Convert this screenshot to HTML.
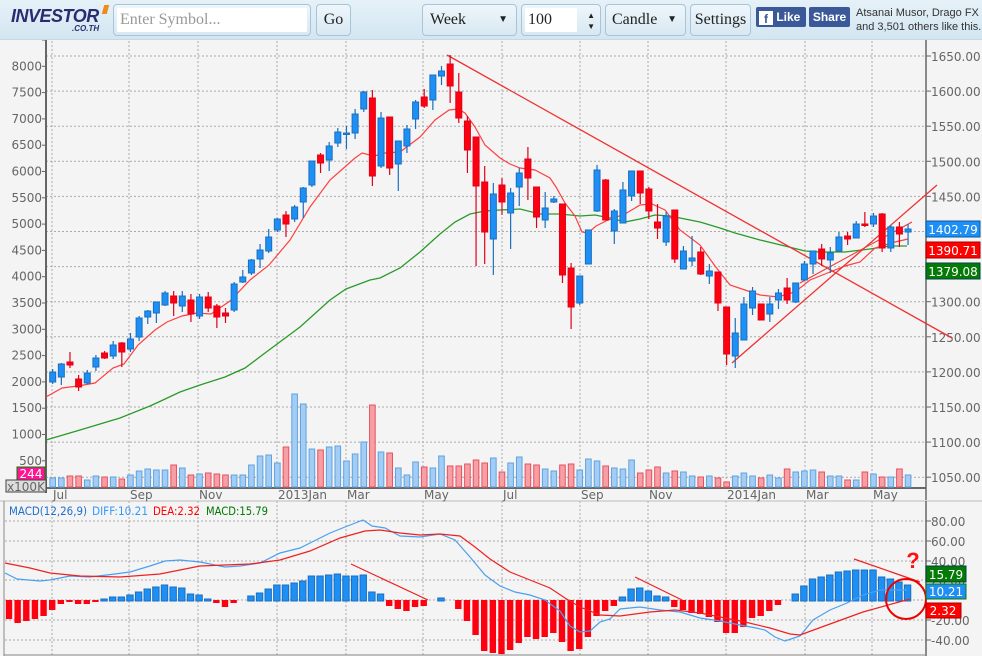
<!DOCTYPE html>
<html><head><meta charset="utf-8"><style>
*{margin:0;padding:0;box-sizing:border-box}
body{width:982px;height:656px;overflow:hidden;background:#f4f4f4;font-family:"DejaVu Sans",sans-serif;position:relative}
#hdr{position:absolute;left:0;top:0;width:982px;height:40px;background:linear-gradient(#e6f1f8,#d3e6f1);border-bottom:1px solid #c5d8e4;z-index:2}
.box{position:absolute;top:4px;height:32px;border:1px solid #a9c4d6;border-radius:4px;background:linear-gradient(#eef6fb,#d8e8f2);font-family:"Liberation Serif",serif;font-size:16px;color:#222;line-height:30px}
.fb{position:absolute;top:7px;height:20px;background:#3b5998;color:#fff;font-family:"Liberation Sans",sans-serif;font-weight:bold;font-size:12px;line-height:20px;border-radius:2px}
svg{position:absolute;left:0;top:0;z-index:1}
</style></head><body>
<div id="hdr">
 <div style="position:absolute;left:11px;top:6px;font-family:'Liberation Sans',sans-serif;font-weight:bold;font-style:italic;font-size:18px;color:#2b2c6f;letter-spacing:-0.5px">INVESTOR</div>
 <div style="position:absolute;left:103px;top:5px;width:5px;height:9px;background:#f08a1c;transform:skewX(-15deg)"></div>
 <div style="position:absolute;left:72px;top:24px;font-family:'Liberation Sans',sans-serif;font-weight:bold;font-style:italic;font-size:8px;color:#2b2c6f">.CO.TH</div>
 <div class="box" style="left:113px;width:198px;padding:3px"><div style="background:#fff;height:24px;line-height:24px;padding-left:3px;color:#999">Enter Symbol...</div></div>
 <div class="box" style="left:316px;width:35px;text-align:center">Go</div>
 <div class="box" style="left:422px;width:95px;padding-left:7px">Week<span style="position:absolute;right:8px;font-size:10px">▼</span></div>
 <div class="box" style="left:521px;width:80px;padding:3px"><div style="background:#fff;width:52px;height:24px;line-height:24px;padding-left:3px">100</div><span style="position:absolute;right:5px;font-size:8px;line-height:11px;top:5px">▲<br>▼</span></div>
 <div class="box" style="left:605px;width:81px;padding-left:6px">Candle<span style="position:absolute;right:8px;font-size:10px">▼</span></div>
 <div class="box" style="left:690px;width:61px;text-align:center">Settings</div>
 <div class="fb" style="left:756px;width:50px;padding-left:3px"><span style="display:inline-block;width:14px;height:14px;background:#fff;color:#3b5998;text-align:center;line-height:16px;font-size:12px;vertical-align:-2px">f</span> Like</div>
 <div class="fb" style="left:809px;width:41px;text-align:center">Share</div>
 <div style="position:absolute;left:856px;top:6px;font-family:'Liberation Sans',sans-serif;font-size:11px;line-height:14px;color:#333">Atsanai Musor, Drago FX<br>and 3,501 others like this.</div>
</div>
<svg id="s" width="982" height="656"></svg>
<script>
var S='';
function L(x1,y1,x2,y2,c,w,d){S+='<line x1="'+x1+'" y1="'+y1+'" x2="'+x2+'" y2="'+y2+'" stroke="'+c+'" stroke-width="'+(w||1)+'"'+(d?' stroke-dasharray="'+d+'"':'')+'/>';}
function R(x,y,w,h,f,s){S+='<rect x="'+x+'" y="'+y+'" width="'+w+'" height="'+h+'" fill="'+f+'"'+(s?' stroke="'+s+'" stroke-width="1"':'')+'/>';}
function T(x,y,t,c,sz,a,tl){S+='<text x="'+x+'" y="'+y+'" fill="'+c+'" font-size="'+(sz||12)+'" font-family="DejaVu Sans,sans-serif"'+(a?' text-anchor="'+a+'"':'')+(tl?' textLength="'+tl+'" lengthAdjust="spacingAndGlyphs"':'')+'>'+t+'</text>';}
function P(pts,c,w){S+='<polyline fill="none" stroke="'+c+'" stroke-width="'+(w||1)+'" points="'+pts+'"/>';}
var dx=[52,129,198,277,346,423,502,580,648,726,805,872];
for(var k=0;k<13;k++){var y=56+35.1*k;L(46,y,926,y,'#aaa',1,'2,2');}
dx.forEach(function(x){L(x,41,x,488,'#aaa',1,'2,2');L(x,501,x,655,'#aaa',1,'2,2');});
[521,541,561,580,600,620,640].forEach(function(y){L(5,y,926,y,'#aaa',1,'2,2');});
L(46,40,46,493,'#666',2);L(926,40,926,500,'#666',1.5);L(46,488,926,488,'#666',2);
L(0,501,982,501,'#bbb',1);L(4,501,4,656,'#888',1);L(926,501,926,656,'#666',1.5);L(4,655,926,655,'#888',1);
var lv=[8500,8000,7500,7000,6500,6000,5500,5000,4500,4000,3500,3000,2500,2000,1500,1000,500];
lv.forEach(function(v,i){var y=40+26.3*i;T(42,(i==0?y-1:y+4),v,'#666',12,'end');L(42,y,46,y,'#666');});
var rv=[1650,1600,1550,1500,1450,1400,1350,1300,1250,1200,1150,1100,1050];
rv.forEach(function(v,i){var y=56+35.1*i;T(931,y+5,v+'.00','#666',12);L(926,y,931,y,'#666');});
['Jul','Sep','Nov','2013Jan','Mar','May','Jul','Sep','Nov','2014Jan','Mar','May'].forEach(function(t,i){T(dx[i]+1,499,t,'#666',12);});
[[80,521],[60,541],[40,561],[20,580],[-20,620],[-40,640]].forEach(function(a){T(931,a[1]+5,a[0].toFixed(2),'#666',12);L(926,a[1],931,a[1],'#666');});
var V='b478 b478 r476 r476 b480 b476 r477 b477 r479 b475 b471 b469 b470 b470 r465 b468 r475 b474 r473 r474 r475 b475 b475 b465 b456 b455 b463 r447 b394 b404 b449 r450 b447 b446 b461 b454 b442 r405 b452 r453 b468 b475 b462 r467 b468 b456 r466 r466 r464 r460 r463 b458 r472 b463 b457 r464 r465 b469 b471 r465 r464 b470 b459 b461 r466 b468 b469 b460 r473 r470 r467 b473 r471 b472 b476 r477 b476 r478 r482 b476 b473 b476 r478 b475 b478 r469 b472 b471 b470 r472 b476 b476 r480 b480 r472 b474 r477 b477 r469 b475'.split(' ');
V.forEach(function(v,i){var x=52.7+8.64*i,y=+v.slice(1);R(x-2.8,y,5.6,487-y,v[0]=='b'?'#a3cdf5':'#f6a0a6',v[0]=='b'?'#5fa3e0':'#e8505f');});
P('46,440 80,430 120,418 150,406 163,400 180,392 200,385 225,377 245,368 265,353 300,327 330,300 346,289 370,280 380,278 400,268 420,252 440,234 455,222 470,214 485,211 500,210 520,209 540,214 560,214 580,216 595,215 610,218 625,222 640,219 655,215 670,216 680,218 700,222 720,228 735,233 760,240 785,246 805,251 820,252 845,252 870,249 890,246 907,246','#2a9a2a',1.3);
P('46,397 62,388 78,386 95,383 113,368 124,364 138,345 155,330 167,322 182,316 197,313 211,314 230,301 250,280 269,265 290,240 310,207 330,180 355,158 362,153 374,156 385,153 400,152 420,137 435,120 449,110 458,109 465,113 475,127 485,145 500,158 510,164 520,168 535,170 550,178 556,187 565,203 575,216 582,232 588,233 596,226 608,220 625,214 640,205 652,204 665,210 680,230 700,245 715,266 730,285 745,290 760,295 778,297 795,292 810,280 830,272 845,266 860,262 875,248 895,242 908,239','#ff4040',1.2);
L(447,55,952,338,'#f03030',1.3);L(732,363,937,185,'#f03030',1.3);L(800,283,912,222,'#f03030',1);
var C='b372,382,369,384|b364,377,363,385|r362,365,352,368|r379,387,375,391|b373,383,370,384|b358,367,355,371|r353,358,351,359|b345,356,341,359|r343,352,342,367|b339,349,333,352|b318,337,316,341|b311,317,310,324|b302,313,302,323|b293,305,291,306|r296,303,291,316|b296,306,291,312|r300,314,294,322|b297,316,294,319|r297,308,292,312|r306,317,304,328|r313,316,308,323|b284,310,282,312|b277,282,270,283|b260,273,259,275|b250,259,244,268|b237,251,229,253|b219,230,218,232|r215,224,211,237|b207,219,205,222|b188,202,187,218|b161,185,161,187|r155,163,153,173|b146,160,142,171|b132,143,128,147|b133,134,126,149|b114,133,109,139|b92,109,91,112|r98,176,90,186|b118,166,112,168|r117,168,117,175|b141,164,141,191|b129,146,125,153|b102,119,100,129|r97,106,89,108|b75,100,75,110|b71,76,66,85|r64,86,55,103|r92,118,73,123|r121,150,116,173|r137,186,137,266|r182,232,166,264|b194,239,183,275|r185,202,178,215|b193,213,188,249|b173,187,168,206|r159,178,147,200|r187,217,187,228|b208,220,192,228|b199,202,196,203|r204,275,204,283|r268,307,263,329|b276,303,276,305|b230,264,230,264|b170,211,165,212|r180,220,179,220|b211,231,209,244|b190,223,182,223|b171,196,171,201|r171,193,171,204|r189,211,187,219|r222,228,204,239|b216,242,212,246|r210,259,210,263|b251,269,246,269|b258,261,236,266|r252,274,247,275|b271,276,264,284|r272,303,272,311|r307,354,307,365|b333,356,318,368|b304,340,297,340|b291,308,287,315|r304,320,304,320|b304,314,297,322|b293,300,289,309|r288,300,278,304|b283,302,283,303|b264,280,261,280|b251,264,251,274|r249,259,244,266|b253,260,247,273|b237,251,232,251|r236,239,232,245|b224,238,221,238|r224,225,212,227|b216,224,213,227|r214,248,213,252|b227,248,225,252|r227,234,222,247|b229,232,224,245'.split('|');
C.forEach(function(c,i){var x=52.7+8.64*i,a=c.slice(1).split(',').map(Number),b=c[0]=='b';var col=b?'#1a6fc0':'#e0001a';L(x,a[2],x,a[3],col,1.2);R(x-3,a[0],6,Math.max(a[1]-a[0],1.5),b?'#1e8ff5':'#ff0010',col);});
R(926,221,54,16,'#1e8ff5','#0a5aa0');T(953,234,'1402.79','#fff',12,'middle');
R(926,242,54,16,'#ff0000','#a00');T(953,255,'1390.71','#fff',12,'middle');
R(926,263,54,16,'#067a06','#044');T(953,276,'1379.08','#fff',12,'middle');
R(17,467,28,13,'#ff1493','#0a7a0a');T(31,478,'244','#fff',12,'middle');
R(6,480,40,12,'#ddd','#444');T(26,491,'x100K','#666',12,'middle');
T(9,515,'MACD(12,26,9)','#1e6fd0',11.5,null,78);T(92,515,'DIFF:10.21','#3399ff',11.5,null,56);T(153,515,'DEA:2.32','#ff0000',11.5,null,47);T(206,515,'MACD:15.79','#007700',11.5,null,62);
var M=[619,623,621,619,616,610,604,602,604,604,602,599,597,597,595,592,589,587,585,587,588,594,595,599,603,607,603,600,596,593,589,585,585,583,581,576,576,575,574,576,576,575,592,594,606,609,611,607,606,600,598,600,609,621,635,651,653,654,650,643,637,639,637,633,642,651,649,637,616,611,606,597,589,588,591,596,597,607,610,613,614,617,622,633,633,627,618,616,611,605,600,594,586,579,577,575,572,571,570,570,570,577,579,582,585];
M.forEach(function(y,k){var x=9+8.64*k;if(y>600)R(x-3.2,600,6.4,y-600,'#ff0010');else if(y<600)R(x-3.2,y,6.4,601-y,'#1e8ff5','#1a6fc0');});
P('5,573 17,579 40,581 50,580 70,576 90,577 115,574 130,572 150,566 165,561 180,560 200,562 215,565 225,567 240,566 260,563 280,553 300,548 310,543 330,533 345,527 363,520 372,526 385,528 400,536 420,537 440,534 455,540 470,557 485,575 500,586 515,592 530,595 545,600 560,611 570,626 580,632 590,631 600,622 610,619 620,609 640,607 660,610 680,612 700,618 720,621 740,625 756,628 765,630 775,637 785,641 800,636 813,620 830,610 847,603 863,595 880,590 907,590','#4aa0f0',1.2);
P('5,563 30,568 50,573 80,576 120,577 160,574 200,566 250,564 280,560 310,551 340,538 365,531 380,530 400,533 420,535 440,534 460,536 475,547 490,559 510,572 530,580 550,588 565,598 580,607 600,615 620,616 650,612 675,610 700,613 720,617 745,622 770,628 790,634 800,635 830,624 863,612 910,599','#f02020',1.2);
L(351,564,428,600,'#f02020',1.2);L(635,577,682,600,'#f02020',1.2);L(854,559,920,582,'#f02020',1.2);
S+='<circle cx="906" cy="599" r="20" fill="none" stroke="#e00" stroke-width="2"/>';
S+='<text x="913" y="568" fill="#ff1010" font-size="22" font-weight="bold" font-family="Liberation Sans,sans-serif" text-anchor="middle">?</text>';
R(926,566,40,16,'#067a06','#044');T(946,579,'15.79','#fff',12,'middle');
R(926,584,40,15,'#1e8ff5','#0a7a0a');T(946,596,'10.21','#fff',12,'middle');
R(926,603,35,15,'#ff0000','#a00');T(943,615,'2.32','#fff',12,'middle');
document.getElementById('s').innerHTML=S;
</script>
</body></html>
